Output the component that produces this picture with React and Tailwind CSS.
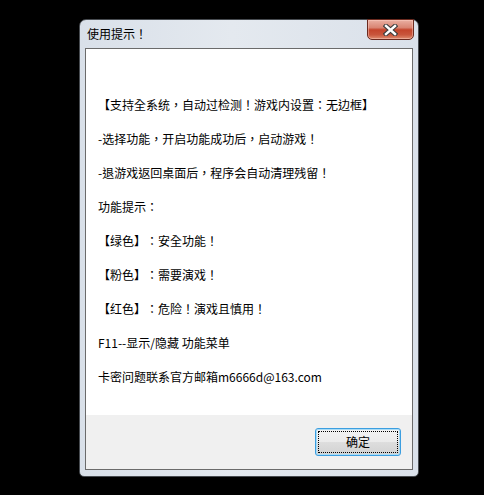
const LINES = [
  "【支持全系统，自动过检测！游戏内设置：无边框】",
  "-选择功能，开启功能成功后，启动游戏！",
  "-退游戏返回桌面后，程序会自动清理残留！",
  "功能提示：",
  "【绿色】：安全功能！",
  "【粉色】：需要演戏！",
  "【红色】：危险！演戏且慎用！",
  "F11--显示/隐藏 功能菜单",
  "卡密问题联系官方邮箱m6666d@163.com",
];

function CloseButton() {
  return (
    <div className="-mt-px mr-[4px] w-[47px] h-[21px] rounded-b-[5px] border border-[#6a2a1f] bg-[linear-gradient(#eab0a2,#d98573_40%,#c4442b_52%,#c9563c_78%,#df8d70)] flex items-center justify-center shadow-[inset_0_0_0_1px_rgba(255,210,200,0.45)]">
      <svg width="15" height="12" viewBox="0 0 15 12">
        <path d="M3 2 L12 10 M12 2 L3 10" stroke="#3d3d3d" strokeWidth="4.6" strokeLinecap="square" />
        <path d="M3 2 L12 10 M12 2 L3 10" stroke="#ffffff" strokeWidth="2.4" strokeLinecap="square" />
      </svg>
    </div>
  );
}

export default function App() {
  return (
    <div
      className="w-[484px] h-[495px] bg-black pt-[19px] pl-[79px] [text-spacing-trim:space-all]"
      style={{ fontFamily: '"Noto Sans CJK TC", "Noto Sans CJK SC", sans-serif' }}
    >
      {/* window frame */}
      <div className="w-[340px] h-[458px] rounded-t-[7px] rounded-b-[5px] border border-[#474b50] bg-[linear-gradient(90deg,#d9e0e9,#e4e9ef_45%,#dae1ea)] flex flex-col">
        <div className="h-[28px] flex items-start justify-between shrink-0">
          <span className="pl-[7px] pt-[5px] text-[12px] leading-[18px] text-black">使用提示！</span>
          <CloseButton />
        </div>

        {/* client area */}
        <div className="mx-[5px] h-[422px] border border-[#6b6b6b] flex flex-col bg-[#f0f0f0]">
          <div className="h-[366px] bg-white pt-[39px] pl-[12px]">
            {LINES.map((line) => (
              <p key={line} className="h-[34px] leading-[34px] text-[12px] text-black whitespace-nowrap">
                {line}
              </p>
            ))}
          </div>
          <div className="flex-1 flex justify-end pt-[13px] pr-[11px]">
            <button className="w-[86px] h-[28px] rounded-[3px] border border-[#3c9ee0] bg-[linear-gradient(#f3f3f3,#ebebeb_48%,#dddddd_52%,#d2d2d2)] p-[2px] shadow-[inset_0_0_0_1px_#a8dcf7]">
              <span className="w-full h-full flex items-center justify-center border border-dotted border-black text-[12px] text-black">
                确定
              </span>
            </button>
          </div>
        </div>
      </div>
    </div>
  );
}
